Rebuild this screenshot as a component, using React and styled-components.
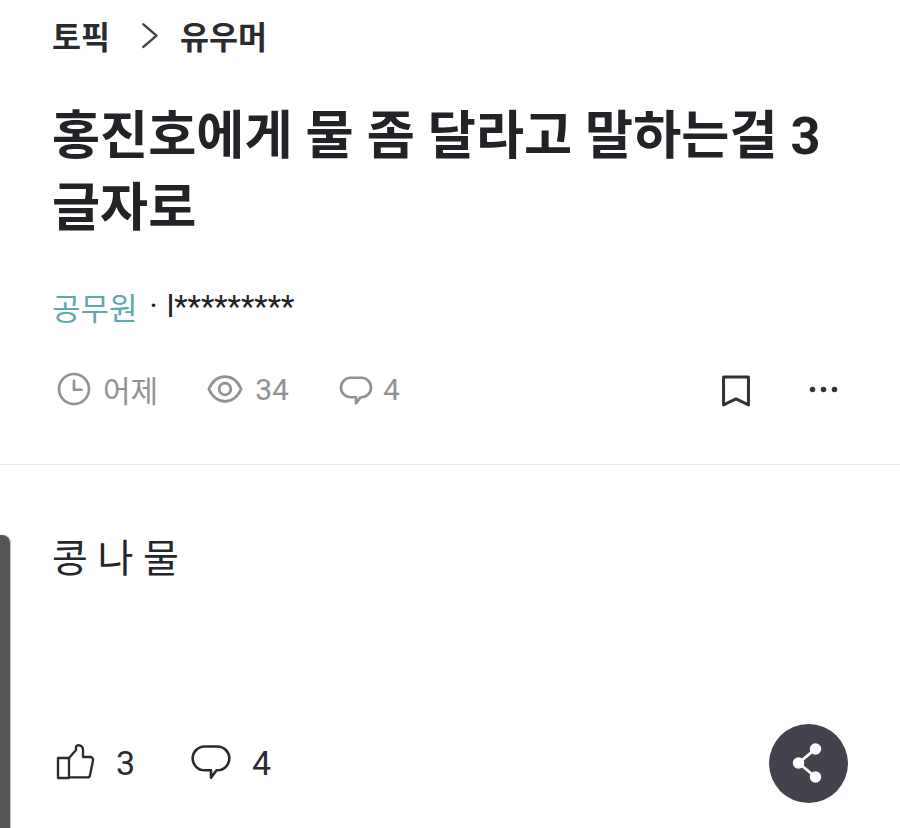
import React from "react"
import styled, { createGlobalStyle } from "styled-components"

const GlobalStyle = createGlobalStyle`
  html, body {
    margin: 0;
    background: #fff;
  }
  body {
    font-family: "Roboto", "Noto Sans CJK KR", sans-serif;
  }
`

const Page = styled.div`
  position: relative;
  width: 900px;
  height: 828px;
  overflow: hidden;
  background: #fff;
`

const Header = styled.header`
  padding: 12px 52px 0;
  height: 465px;
  box-sizing: border-box;
  border-bottom: 1px solid #e8e8e8;
`

const Crumbs = styled.nav`
  display: flex;
  align-items: center;
  height: 46px;
  font-size: 31.5px;
  font-weight: 700;
  color: #2a2b2e;
  gap: 24px;
`

const Chevron = styled.span`
  display: flex;
  margin-right: -8px;
`

const Title = styled.h1`
  margin: 42px 0 0;
  font-size: 52.3px;
  line-height: 72px;
  font-weight: 700;
  color: #222326;
  white-space: nowrap;
`

const Author = styled.div`
  margin-top: 40px;
  display: flex;
  align-items: center;
  height: 44px;
  font-size: 31px;
  color: #222;
`

const Job = styled.span`
  color: #5fa9ae;
`

const Dot = styled.span`
  margin: 0 9px 0 12px;
`

const Stats = styled.div`
  margin-top: 38px;
  padding-left: 4px;
  display: flex;
  align-items: center;
  height: 46px;
  color: #929292;
  font-size: 30px;
`

const Stat = styled.span`
  display: flex;
  align-items: center;
  gap: ${(p) => p.$gap || 11}px;
  margin-right: ${(p) => p.$right || 0}px;
`

const Actions = styled.div`
  margin-left: auto;
  display: flex;
  align-items: center;
  gap: 53px;
  padding-right: 8px;
`

const Body = styled.main`
  padding: 66px 52px 0;
  font-size: 39px;
  line-height: 56px;
  color: #25262a;
`

const Footer = styled.footer`
  position: absolute;
  left: 56px;
  right: 52px;
  bottom: 25px;
  display: flex;
  align-items: center;
  height: 80px;
  font-size: 34px;
  color: #2a2b2e;
`

const ShareButton = styled.button`
  margin-left: auto;
  width: 79px;
  height: 79px;
  padding: 0;
  border: 0;
  border-radius: 50%;
  background: #42434d;
  display: flex;
  align-items: center;
  justify-content: center;
`

const EdgeBar = styled.div`
  position: absolute;
  left: 0;
  top: 535px;
  bottom: 0;
  width: 10px;
  background: #555;
  border-top-right-radius: 8px;
  box-shadow: 1px 0 1px #bbb;
`

const Icon = ({ size, color = "currentColor", width = 2, children }) => (
  <svg width={size} height={size} viewBox="0 0 24 24" fill="none" stroke={color} strokeWidth={width} strokeLinecap="round" strokeLinejoin="round">
    {children}
  </svg>
)

const Bubble = ({ lift = 0 }) => (
  <path transform={`translate(0 ${lift})`} d="M8.500 4.500h7a6.500 6.500 0 0 1 0 13h-.5l-3 4v-4H8.500a6.500 6.500 0 0 1 0-13z" />
)

const App = () => (
  <Page>
    <GlobalStyle />
    <Header>
      <Crumbs>
        <span>토픽</span>
        <Chevron>
          <Icon size={30} color="#444" width={2}>
            <path d="M7.500 3.500l10.500 9-10.500 9" />
          </Icon>
        </Chevron>
        <span>유우머</span>
      </Crumbs>
      <Title>
        홍진호에게 물 좀 달라고 말하는걸 3
        <br />
        글자로
      </Title>
      <Author>
        <Job>공무원</Job>
        <Dot>·</Dot>
        <span>l*********</span>
      </Author>
      <Stats>
        <Stat $right={49}>
          <Icon size={36} width={1.8}>
            <circle cx="12" cy="12" r="10" />
            <path d="M12 6.500V12.500h5" />
          </Icon>
          <span>어제</span>
        </Stat>
        <Stat $right={49} $gap={12}>
          <Icon size={36} width={1.8}>
            <path d="M1.200 12C3.500 7 7.500 3.800 12 3.800s8.500 3.200 10.800 8.200c-2.300 5-6.300 8.200-10.800 8.200S3.500 17 1.200 12z" />
            <circle cx="12" cy="12" r="3.900" />
          </Icon>
          <span>34</span>
        </Stat>
        <Stat $gap={9}>
          <Icon size={36} width={1.8}>
            <Bubble />
          </Icon>
          <span>4</span>
        </Stat>
        <Actions>
          <Icon size={36} color="#333" width={2}>
            <path d="M3.700 4h16.600v18.600L12 18.600l-8.300 4z" />
          </Icon>
          <Icon size={33} color="#333" width={0}>
            <circle cx="4" cy="12" r="2" fill="#333" />
            <circle cx="12" cy="12" r="2" fill="#333" />
            <circle cx="20" cy="12" r="2" fill="#333" />
          </Icon>
        </Actions>
      </Stats>
    </Header>
    <Body>콩 나 물</Body>
    <EdgeBar />
    <Footer>
      <Stat $gap={20} $right={54}>
        <Icon size={40} color="#2a2b2e" width={1.400}>
          <path d="M1.200 9h6.600v12H1.200zM7.800 9L12 4.200V2.400c0-1.500 4.200-1.800 4.200 1.800v4.200h4.200c1.200 0 2 1 1.800 2l-1.800 9c-.2.700-.6 1.200-1.400 1.200H7.800" />
        </Icon>
        <span>3</span>
      </Stat>
      <Stat $gap={19}>
        <Icon size={44} color="#2a2b2e" width={1.400}>
          <Bubble lift={-1.500} />
        </Icon>
        <span>4</span>
      </Stat>
      <ShareButton aria-label="공유">
        <Icon size={40} color="#fff" width={1.700}>
          <circle cx="15.900" cy="3.600" r="2.600" fill="#fff" />
          <circle cx="5.700" cy="12" r="2.600" fill="#fff" />
          <circle cx="15.900" cy="20.400" r="2.600" fill="#fff" />
          <path d="M15.900 3.600L5.700 12l10.200 8.400" />
        </Icon>
      </ShareButton>
    </Footer>
  </Page>
)

export default App
